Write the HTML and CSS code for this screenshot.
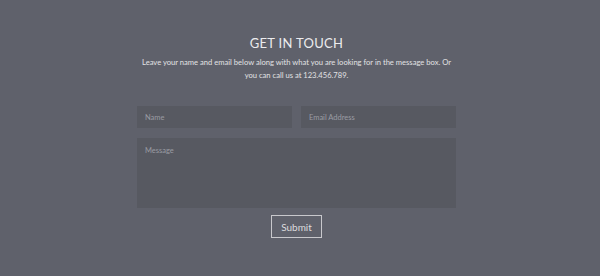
FILE: index.html
```html
<!DOCTYPE html>
<html lang="en">
<head>
    <meta charset="UTF-8">
    <meta name="viewport" content="width=device-width, initial-scale=1.0">
    <title>Contact</title>
    <link rel="stylesheet" href="styles.css">
</head>
<body>

<div class="contact">
    <h2>GET IN TOUCH</h2>
    <p class="intro">Leave your name and email below along with what you are looking for in the message box. Or<br>you can call us at 123.456.789.</p>

    <form class="contact-form">
        <div class="row">
            <input type="text" placeholder="Name">
            <input type="email" placeholder="Email Address">
        </div>
        <textarea placeholder="Message"></textarea>
        <button type="submit" class="submit-btn">Submit</button>
    </form>
</div>

</body>
</html>
```

FILE: styles.css
```css
* { margin: 0; padding: 0; box-sizing: border-box; }
body {
    font-family: Lato, "Open Sans", sans-serif;
    background: #5f616b;
    color: #e6e6e8;
    height: 276px;
    padding-right: 7px;
}
.contact { width: 319px; margin: 0 auto; padding-top: 35px; text-align: center; }
h2 { font-size: 13px; font-weight: 400; letter-spacing: 0.3px; color: #ececee; margin-bottom: 5px; }
.intro { font-size: 7.6px; line-height: 13px; color: #e2e2e4; white-space: nowrap; margin: 0 -20px; }
.contact-form { display: flex; flex-direction: column; align-items: center; margin-top: 24px; }
.row { display: flex; gap: 9px; width: 100%; margin-bottom: 10px; }
input, textarea {
    width: 100%; background: #575961; border: none;
    color: #ccc; font-family: inherit; font-size: 7.5px;
    padding: 0 8px; outline: none;
}
input { height: 22px; }
textarea { height: 70px; padding-top: 8px; resize: none; }
input::placeholder, textarea::placeholder { color: #9a9ca3; }
.submit-btn {
    margin-top: 7px; width: 51px; height: 23px;
    background: transparent; border: 1px solid #c8c8cc;
    color: #dcdcde; font-family: inherit; font-size: 10px; cursor: pointer;
}
```
